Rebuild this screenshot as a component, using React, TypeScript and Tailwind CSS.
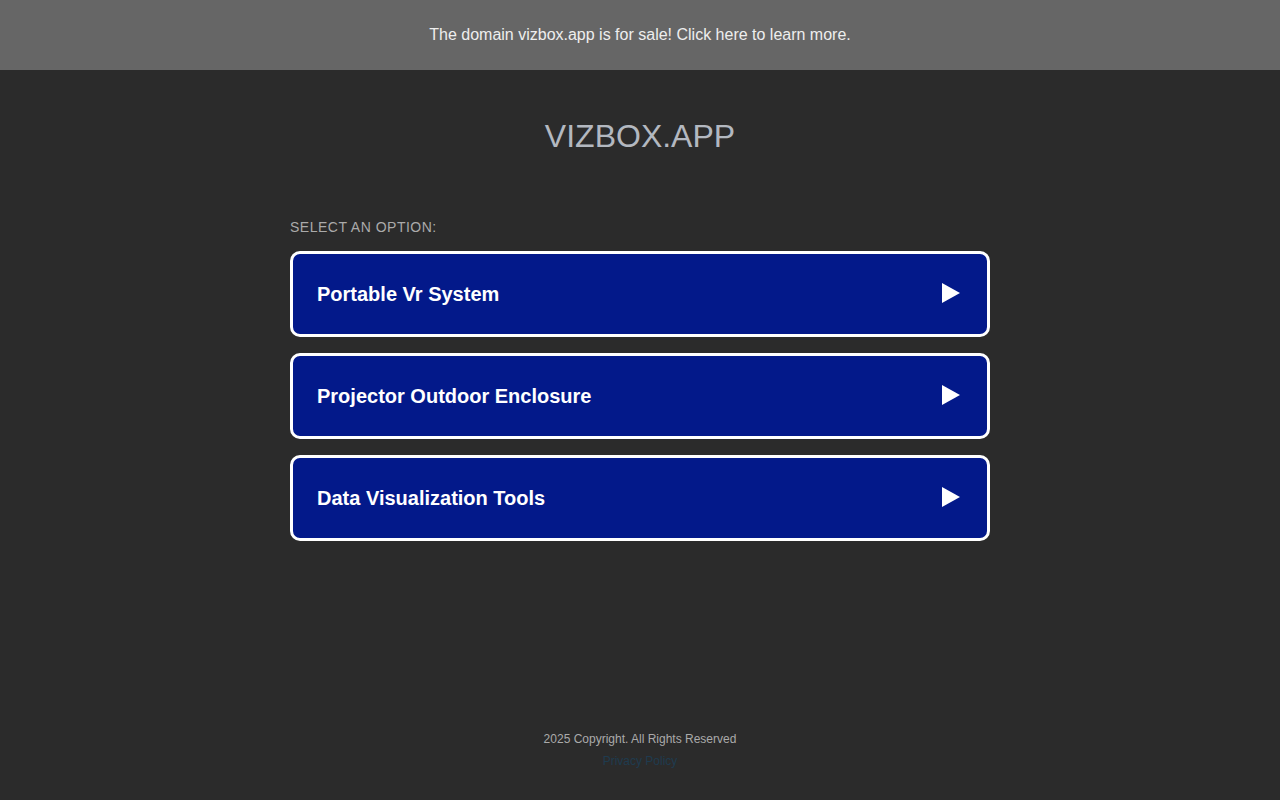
const options = ["Portable Vr System", "Projector Outdoor Enclosure", "Data Visualization Tools"]

export default function App() {
  return (
    <div className="flex min-h-[800px] flex-col bg-[#2b2b2b] font-['Liberation_Sans',Arial,sans-serif]">
      <div className="flex h-[70px] items-center justify-center bg-[#666666] text-[16px] text-[#eeeeee]">
        The domain vizbox.app is for sale! Click here to learn more.
      </div>

      <div className="flex flex-1 flex-col items-center">
        <h1 className="mt-[46px] text-[32px] leading-[40px] text-[#b3b8c0]">VIZBOX.APP</h1>

        <div className="mt-[61px] w-[700px]">
          <p className="text-[14px] leading-[20px] tracking-[0.5px] text-[#aaaaaa]">SELECT AN OPTION:</p>
          <div className="mt-[14px] flex flex-col gap-4">
            {options.map((o) => (
              <a
                key={o}
                href="#"
                className="flex h-[86px] items-center justify-between rounded-[10px] border-[3px] border-white bg-[#03198a] pl-[24px] pr-[27px]"
              >
                <span className="text-[20px] font-bold text-white">{o}</span>
                <svg width="18" height="20" viewBox="0 0 18 20" className="-mt-[2px]">
                  <polygon points="0,0 18,10 0,20" fill="white" />
                </svg>
              </a>
            ))}
          </div>
        </div>

        <div className="mt-auto mb-[31px] flex flex-col items-center gap-[6px]">
          <p className="text-[12px] leading-[16px] text-[#aaaaaa]">2025 Copyright. All Rights Reserved</p>
          <a href="#" className="text-[12px] leading-[16px] text-[#1f3b4f]">Privacy Policy</a>
        </div>
      </div>
    </div>
  )
}
